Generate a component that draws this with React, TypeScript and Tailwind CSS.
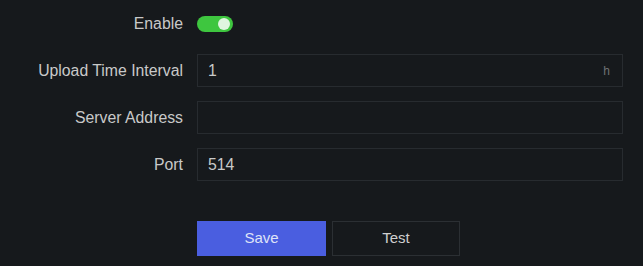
export default function App() {
  const rows = [
    { label: 'Upload Time Interval', value: '1', unit: 'h' },
    { label: 'Server Address', value: '' },
    { label: 'Port', value: '514' },
  ];

  return (
    <div
      className="w-[643px] h-[266px] bg-[#16191c] text-[15.8px] text-[#c9c9c9] pt-[7px]"
      style={{ fontFamily: '"Liberation Sans", Arial, sans-serif' }}
    >
      <div className="flex flex-col gap-[14px]">
        <div className="flex items-center h-[33px]">
          <div className="w-[183px] text-right">Enable</div>
          <div className="ml-[14px] w-[36px] h-[16px] rounded-full bg-[#3ec63f] flex items-center justify-end pr-[3px]">
            <div className="w-[12px] h-[12px] rounded-full bg-[#dff5df]" />
          </div>
        </div>
        {rows.map((r) => (
          <div key={r.label} className="flex items-center h-[33px]">
            <div className="w-[183px] text-right">{r.label}</div>
            <div className="ml-[14px] w-[426px] h-[33px] border border-[#272b2f] flex items-center justify-between pl-[10px] pr-[12px]">
              <span>{r.value}</span>
              {r.unit && <span className="text-[12px] text-[#6d7175]">{r.unit}</span>}
            </div>
          </div>
        ))}
      </div>
      <div className="flex gap-[6px] ml-[197px] mt-[40px]">
        <button className="w-[129px] h-[35px] bg-[#4a5ee0] text-[#dfe3f7] text-[15px]">Save</button>
        <button className="w-[128px] h-[35px] border border-[#2b2f33] text-[#cfcfcf] text-[15px]">Test</button>
      </div>
    </div>
  );
}
